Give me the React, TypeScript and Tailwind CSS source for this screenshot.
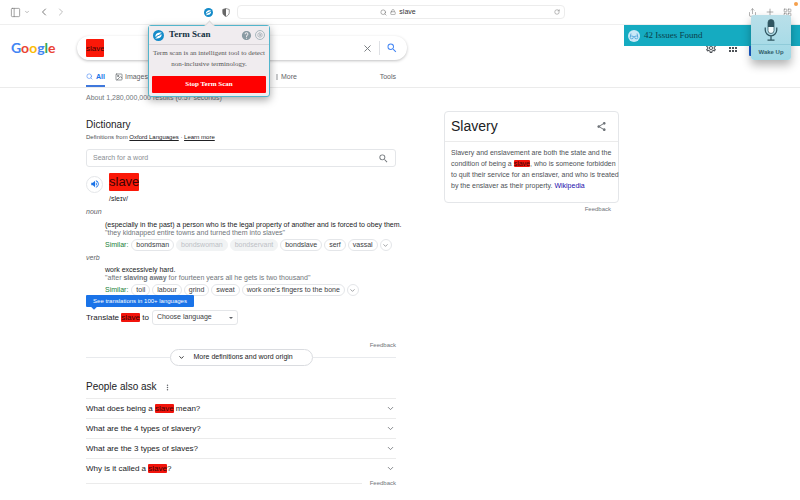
import { useState } from 'react'
import type { ReactNode } from 'react'
import {
  ChevronDown,
  ChevronLeft,
  ChevronRight,
  Image as ImageIcon,
  LayoutGrid,
  Lock,
  PanelLeft,
  Plus,
  RotateCw,
  Search,
  Settings,
  Share,
  X,
} from 'lucide-react'
import { MdApps, MdHelp, MdMoreVert, MdOutlineSettings, MdSearch, MdShare, MdVolumeUp } from 'react-icons/md'

const LOGO = [
  { letter: 'G', color: 'text-[#4285f4]' },
  { letter: 'o', color: 'text-[#ea4335]' },
  { letter: 'o', color: 'text-[#fbbc05]' },
  { letter: 'g', color: 'text-[#4285f4]' },
  { letter: 'l', color: 'text-[#34a853]' },
  { letter: 'e', color: 'text-[#ea4335]' },
]

const NOUN_TERMS = [
  { term: 'bondsman' },
  { term: 'bondswoman', muted: true },
  { term: 'bondservant', muted: true },
  { term: 'bondslave' },
  { term: 'serf' },
  { term: 'vassal' },
]

const VERB_TERMS = [
  { term: 'toil' },
  { term: 'labour' },
  { term: 'grind' },
  { term: 'sweat' },
  { term: "work one's fingers to the bone" },
]

const QUESTIONS = [
  { id: 'mean', text: <>What does being a <Flag>slave</Flag> mean?</> },
  { id: 'slavery', text: <>What are the 4 types of slavery?</> },
  { id: 'slaves', text: <>What are the 3 types of slaves?</> },
  { id: 'called', text: <>Why is it called a <Flag>slave</Flag>?</> },
]

function Flag({ children }: { children: ReactNode }) {
  return <mark className="rounded-[1px] bg-[#f2140c] text-[#3c0404]">{children}</mark>
}

function ScanLogo({ className }: { className: string }) {
  return (
    <svg viewBox="0 0 24 24" className={className} aria-hidden="true">
      <circle cx="12" cy="12" r="12" fill="#148bc9" />
      <path d="M5 15c0-5 3-8 7-9l7-1-3 5-7 2z" fill="#fff" />
      <path d="M19 9c0 5-3 8-7 9l-7 1 3-5 7-2z" fill="#fff" />
      <path d="M6 18 18 6" stroke="#148bc9" strokeWidth="1" />
    </svg>
  )
}

function BrowserBar() {
  return (
    <header className="flex h-[25px] items-center border-b border-[#efefef] text-[#7b7b7b]">
      <div className="flex flex-1 items-center pl-[10px]">
        <button aria-label="Sidebar"><PanelLeft size={11} strokeWidth={1.5} /></button>
        <button aria-label="Tab groups" className="ml-[3px]"><ChevronDown size={6} /></button>
        <button aria-label="Back" className="ml-[8px]"><ChevronLeft size={12} strokeWidth={2} /></button>
        <button aria-label="Forward" className="ml-[5px] text-[#bdbdbd]"><ChevronRight size={12} strokeWidth={2} /></button>
        <span className="flex-1" />
        <button aria-label="Term Scan"><ScanLogo className="size-[9px]" /></button>
        <button aria-label="Privacy report" className="ml-[9px] mr-[7px]">
          <svg viewBox="0 0 16 18" className="h-[9px] w-2" aria-hidden="true">
            <path d="M8 1c3 1 5 1.500 6.500 2v6c0 4-3 6.500-6.500 8-3.500-1.500-6.500-4-6.500-8V3C3 2.500 5 2 8 1z" fill="none" stroke="#777" strokeWidth="1.500" />
            <path d="M8 1v16C4.500 15.500 1.500 13 1.500 9V3C3 2.500 5 2 8 1z" fill="#666" />
          </svg>
        </button>
      </div>
      <div className="flex h-[14px] w-[41%] items-center rounded-[4px] border border-[#ececec] px-1">
        <div className="flex flex-1 items-center justify-center gap-[3px] text-[7px] text-[#333]">
          <Search size={7} className="text-[#777]" />
          <Lock size={6} className="text-[#777]" />
          <span>slave</span>
        </div>
        <button aria-label="Reload"><RotateCw size={6} /></button>
      </div>
      <div className="flex flex-1 items-center justify-end gap-2 pr-2">
        <button aria-label="Share"><Share size={9} strokeWidth={1.5} /></button>
        <button aria-label="New tab"><Plus size={10} strokeWidth={1.5} /></button>
        <button aria-label="Tab overview"><LayoutGrid size={9} strokeWidth={1.5} /></button>
      </div>
    </header>
  )
}

function SearchHeader() {
  const [query, setQuery] = useState('slave')

  return (
    <div className="flex h-[63px] flex-col justify-between border-b border-[#ebebeb] pt-[11px]">
      <div className="flex h-6 items-center">
        <a href="#home" className="w-[77px] pl-[11px] font-['Lato'] text-[14px] font-bold leading-6" aria-label="Google">
          {LOGO.map((l, i) => (
            <span key={i} className={l.color}>{l.letter}</span>
          ))}
        </a>
        <form
          className="flex h-6 w-[330px] items-center rounded-full px-[9px] shadow-[0_1px_3px_rgba(32,33,36,0.28)]"
          onSubmit={(e) => e.preventDefault()}
        >
          <input
            aria-label="Search"
            value={query}
            onChange={(e) => setQuery(e.target.value)}
            className="h-[18px] w-[18px] rounded-[1px] bg-[#fb1808] text-[8px] text-[#3c0404] outline-none"
          />
          <span className="flex-1" />
          <button type="button" aria-label="Clear" onClick={() => setQuery('')} className="text-[#70757a]">
            <X size={11} />
          </button>
          <span className="mx-[6px] h-[14px] w-px bg-[#dfe1e5]" />
          <button aria-label="Search" className="text-[#4285f4]"><MdSearch size={12} /></button>
        </form>
        <span className="flex-1" />
        <button aria-label="Quick settings" className="mr-[10px] text-[#4d5156]"><MdOutlineSettings size={12} /></button>
        <button aria-label="Google apps" className="mr-[10px] text-[#4d5156]"><MdApps size={12} /></button>
        <button aria-label="Sign in" className="mr-[11px] h-4 w-10 rounded-[1px] bg-[#1a5fd0]" />
      </div>
      <nav className="flex h-[19px] w-[396px] text-[7px] leading-[18px] text-[#5f6368]">
        <a href="#all" className="ml-[86px] flex items-start gap-[3px] border-b-2 border-[#3f78dc] font-bold text-[#1a73e8]">
          <Search size={7} className="mt-[5px] text-[#4285f4]" />
          All
        </a>
        <a href="#images" className="ml-[10px] flex items-start gap-[2px]">
          <ImageIcon size={8} className="mt-[5px]" />
          Images
        </a>
        <a href="#more" className="ml-[125px] flex items-start">
          <MdMoreVert size={8} className="mt-[5px]" />
          More
        </a>
        <a href="#tools" className="ml-auto">Tools</a>
      </nav>
    </div>
  )
}

function SimilarTerms({ terms }: { terms: { term: string; muted?: boolean }[] }) {
  return (
    <div className="mt-[2px] flex h-3 items-center gap-[2px] whitespace-nowrap pl-[19px] text-[7px] leading-[10px]">
      <span className="mr-[1px] text-[#188038]">Similar:</span>
      {terms.map((t) => (
        <button
          key={t.term}
          className={
            t.muted
              ? 'rounded-full border border-[#f1f3f4] bg-[#f1f3f4] px-1 text-[#bdc1c6]'
              : 'rounded-full border border-[#e4e6e9] px-1 text-[#3c4043]'
          }
        >
          {t.term}
        </button>
      ))}
      <button aria-label="More similar words" className="flex size-3 items-center justify-center rounded-full border border-[#e4e6e9] text-[#5f6368]">
        <ChevronDown size={7} />
      </button>
    </div>
  )
}

function Dictionary() {
  return (
    <section className="text-[#202124]">
      <h2 className="mt-[10px] text-[10px] leading-[14px]">Dictionary</h2>
      <p className="text-[6px] leading-[10px] text-[#4d5156]">
        Definitions from <a href="#oxford" className="text-[#202124] underline">Oxford Languages</a> ·{' '}
        <a href="#learn" className="text-[#202124] underline">Learn more</a>
      </p>
      <form
        className="mt-[7px] flex h-[18px] items-center rounded-[3px] border border-[#e4e6e9] px-[6px]"
        onSubmit={(e) => e.preventDefault()}
      >
        <input
          aria-label="Search for a word"
          placeholder="Search for a word"
          className="flex-1 text-[7px] outline-none placeholder:text-[#8a8e93]"
        />
        <button aria-label="Look up" className="text-[#70757a]"><MdSearch size={11} /></button>
      </form>
      <div className="mt-[6px] flex h-[18px] items-center gap-[6px]">
        <button aria-label="Listen" className="mt-1 flex size-[17px] items-center justify-center rounded-full border border-[#e4e6e9] text-[#1a73e8]">
          <MdVolumeUp size={10} />
        </button>
        <span className="text-[13px] leading-[18px]">
          <mark className="inline-block rounded-[1px] bg-[#fb1808] text-[#3c0404]">slave</mark>
        </span>
      </div>
      <p className="mt-[3px] pl-[23px] text-[7px] leading-[10px]">/sleɪv/</p>
      <p className="mt-[3px] text-[7px] italic leading-[10px] text-[#5f6368]">noun</p>
      <div className="mt-1 whitespace-nowrap pl-[19px] text-[7px] leading-[8px]">
        <p>(especially in the past) a person who is the legal property of another and is forced to obey them.</p>
        <p className="text-[#70757a]">"they kidnapped entire towns and turned them into slaves"</p>
      </div>
      <SimilarTerms terms={NOUN_TERMS} />
      <p className="mt-[2px] text-[7px] italic leading-[10px] text-[#5f6368]">verb</p>
      <div className="mt-[3px] whitespace-nowrap pl-[19px] text-[7px] leading-[8px]">
        <p>work excessively hard.</p>
        <p className="text-[#70757a]">"after <b>slaving away</b> for fourteen years all he gets is two thousand"</p>
      </div>
      <SimilarTerms terms={VERB_TERMS} />
      <div className="relative mt-[14px] flex h-[15px] items-center text-[8px]">
        <div className="absolute bottom-[18px] left-0 flex h-3 w-[108px] items-center justify-center whitespace-nowrap rounded-[1px] bg-[#1a73e8] text-[6px] text-white">
          See translations in 100+ languages
          <span className="absolute -bottom-[2px] left-[6px] size-1 rotate-45 bg-[#1a73e8]" />
        </div>
        <label htmlFor="language">Translate <Flag>slave</Flag> to</label>
        <span className="relative ml-[3px] flex">
          <select
            id="language"
            className="h-[15px] w-[86px] appearance-none rounded-[3px] border border-[#e4e6e9] bg-white pl-1 text-[7px] text-[#3c4043]"
          >
            <option>Choose language</option>
          </select>
          <svg viewBox="0 0 4 2" className="pointer-events-none absolute right-[5px] top-[7px] h-[2px] w-1" aria-hidden="true">
            <path d="M0 0h4L2 2z" fill="#5f6368" />
          </svg>
        </span>
      </div>
      <Feedback className="mt-4" />
      <div className="flex items-center">
        <span className="h-px flex-1 bg-[#e8eaed]" />
        <button className="flex h-[17px] w-[143px] items-center rounded-full border border-[#dadce0] pl-[7px] text-[7px]">
          <ChevronDown size={7} strokeWidth={3} />
          <span className="ml-[9px]">More definitions and word origin</span>
        </button>
        <span className="h-px flex-1 bg-[#e8eaed]" />
      </div>
    </section>
  )
}

function Feedback({ className = '' }: { className?: string }) {
  return (
    <p className={`text-right text-[6px] leading-[8px] text-[#70757a] ${className}`}>
      <a href="#feedback">Feedback</a>
    </p>
  )
}

function PeopleAlsoAsk() {
  return (
    <section className="mt-[14px] text-[#202124]">
      <h2 className="flex items-center gap-[6px] text-[10px] leading-[14px]">
        People also ask <MdMoreVert size={9} className="text-[#5f6368]" />
      </h2>
      <ul className="mt-1">
        {QUESTIONS.map((q) => (
          <li key={q.id} className="border-t border-[#ebebeb]">
            <button className="flex h-[19px] w-full items-center justify-between pr-[1px] text-left text-[8px]">
              <span>{q.text}</span>
              <ChevronDown size={9} className="text-[#5f6368]" />
            </button>
          </li>
        ))}
      </ul>
      <div className="mt-[1px] flex items-center">
        <span className="mr-2 h-px flex-1 bg-[#ebebeb]" />
        <Feedback />
      </div>
    </section>
  )
}

function KnowledgePanel() {
  return (
    <aside className="mt-[23px] w-[175px]">
      <div className="h-[92px] rounded-[4px] border border-[#e4e6e9]">
        <div className="flex h-[30px] items-center justify-between border-b border-[#ebebeb] pl-[6px] pr-[11px]">
          <h2 className="text-[14px] text-[#202124]">Slavery</h2>
          <button aria-label="Share" className="text-[#70757a]"><MdShare size={11} /></button>
        </div>
        <p className="whitespace-nowrap pl-[6px] pt-[5px] text-[7px] leading-[11px] text-[#4d5156]">
          Slavery and enslavement are both the state and the<br />
          condition of being a <Flag>slave</Flag>, who is someone forbidden<br />
          to quit their service for an enslaver, and who is treated<br />
          by the enslaver as their property. <a href="#wikipedia" className="text-[#1a0dab]">Wikipedia</a>
        </p>
      </div>
      <Feedback className="mt-[2px] pr-2" />
    </aside>
  )
}

function TermScanPopup() {
  return (
    <div
      role="dialog"
      aria-label="Term Scan"
      className="absolute left-[148px] top-[25px] w-[122px] rounded-[3px] border border-[#52b5cc] bg-[#f0ecef] font-['Liberation_Serif'] shadow-[0_3px_8px_rgba(0,0,0,0.35)]"
    >
      <span className="absolute -top-[4px] left-[57px] size-[7px] rotate-45 border-l border-t border-[#dcdcdc] bg-[#f0ecef]" />
      <div className="relative flex h-[19px] items-center border-b border-[#d8d4d8] bg-[#f0ecef] px-1">
        <ScanLogo className="size-[11px]" />
        <h2 className="ml-[5px] flex-1 text-[9px] font-bold text-[#12303f]">Term Scan</h2>
        <button aria-label="Help" className="text-[#8a9ba3]"><MdHelp size={11} /></button>
        <button aria-label="Options" className="ml-[3px] flex size-[10px] items-center justify-center rounded-full border border-[#a9b8be] text-[#8a9ba3]">
          <Settings size={6} />
        </button>
      </div>
      <p className="whitespace-nowrap pt-[3px] text-center text-[7px] leading-[11px] text-[#555]">
        Term scan is an intelligent tool to detect<br />
        non-inclusive terminology.
      </p>
      <div className="px-[3px] pb-[3px] pt-[6px]">
        <button className="block h-[17px] w-full rounded-[1px] bg-[#ff0000] text-[7px] font-bold text-white">Stop Term Scan</button>
      </div>
    </div>
  )
}

function IssuesBanner() {
  return (
    <div className="absolute right-0 top-[25px] flex h-[21px] w-[176px] items-center bg-[#15abc1] pl-1 font-['Liberation_Serif'] text-[9px] text-[#0b3f4a]">
      <svg viewBox="0 0 24 24" className="mr-1 size-3" aria-hidden="true">
        <circle cx="12" cy="12" r="12" fill="#c9e8f7" />
        <path d="M4.500 13 6 7M19.500 13 18 7M10.500 13h3" stroke="#3d9bd6" strokeWidth="1.500" fill="none" />
        <rect x="4.500" y="12" width="6" height="5.500" rx="2.500" fill="none" stroke="#3d9bd6" strokeWidth="1.500" />
        <rect x="13.500" y="12" width="6" height="5.500" rx="2.500" fill="none" stroke="#3d9bd6" strokeWidth="1.500" />
      </svg>
      42 Issues Found
    </div>
  )
}

function WakeUpWidget() {
  return (
    <button className="absolute right-[9px] top-[15px] flex h-[45px] w-10 flex-col items-center rounded-[3px] bg-linear-to-b from-[#b9dfe9] to-[#9fd9e6] pt-1 text-[6px] font-bold text-[#33606b] shadow-[0_5px_10px_rgba(0,0,0,0.3)]">
      <svg viewBox="0 0 28 44" className="h-[22px] w-[14px]" aria-hidden="true">
        <rect x="8" y="1" width="12" height="28" rx="6" fill="#f2fbfd" stroke="#2f5560" strokeWidth="1.500" />
        <path d="M8 16V7a6 6 0 0 1 12 0v9z" fill="#2f5560" />
        <path d="M2.500 17v5a11.500 11.500 0 0 0 23 0v-5M14 34v8M7 42h14" fill="none" stroke="#2f5560" strokeWidth="2.500" />
      </svg>
      <span className="mt-[3px] w-full border-t border-[#8fcbd9] pt-[3px]">Wake Up</span>
    </button>
  )
}

export default function App() {
  return (
    <div className="relative min-h-screen overflow-hidden bg-white font-['Liberation_Sans',sans-serif]">
      <BrowserBar />
      <SearchHeader />
      <main className="flex gap-12 pl-[86px]">
        <div className="w-[310px]">
          <p className="text-[7px] leading-[20px] text-[#70757a]">About 1,280,000,000 results (0.57 seconds)</p>
          <Dictionary />
          <PeopleAlsoAsk />
        </div>
        <KnowledgePanel />
      </main>
      <TermScanPopup />
      <IssuesBanner />
      <span className="absolute right-[2px] top-[2px] size-1 rounded-full bg-[#f5a04c]" />
      <WakeUpWidget />
    </div>
  )
}
